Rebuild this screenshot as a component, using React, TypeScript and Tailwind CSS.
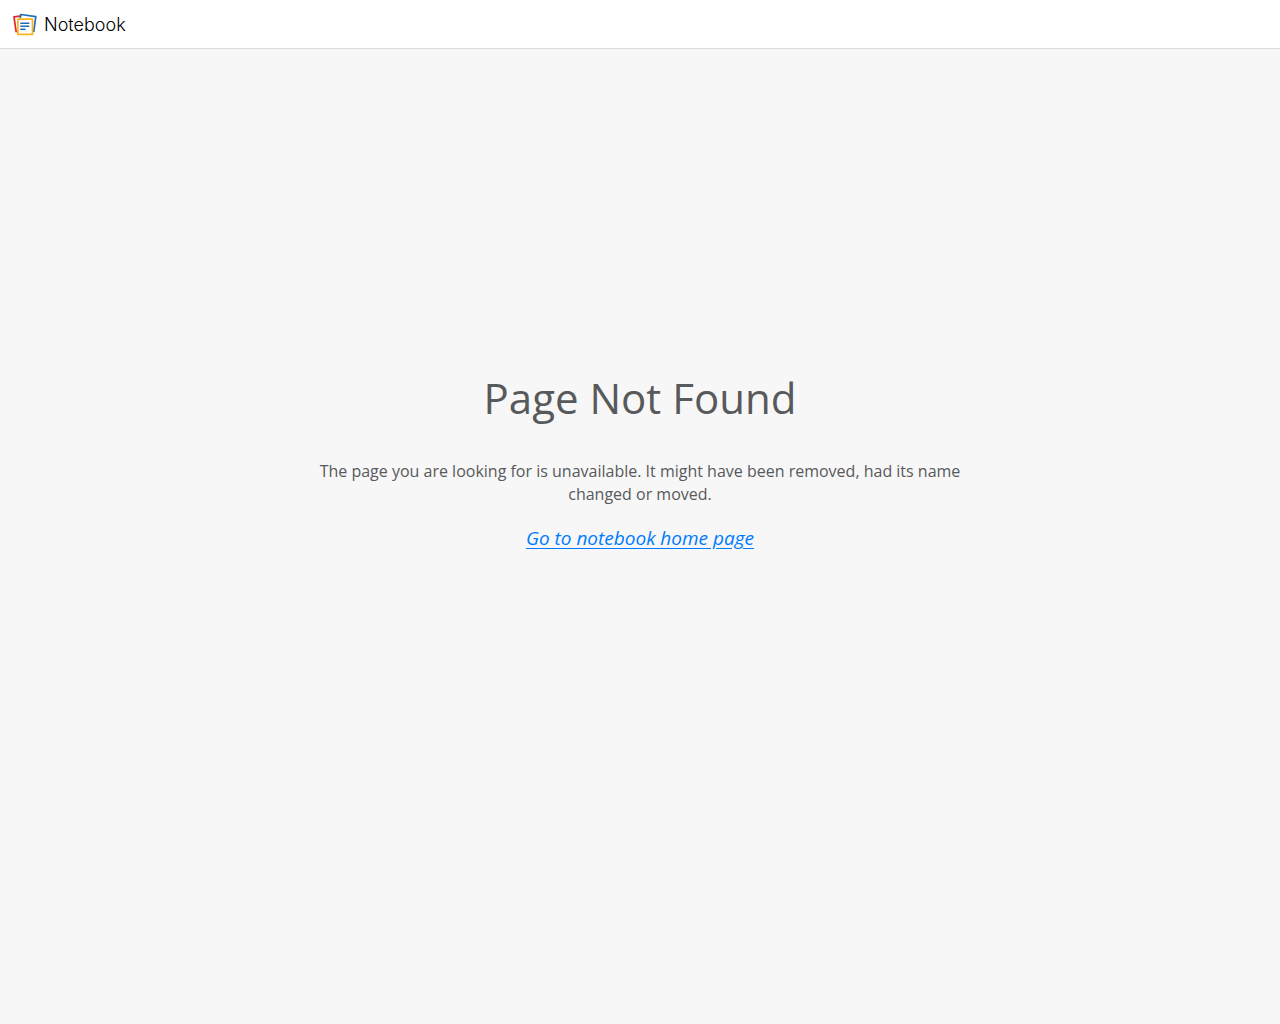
function NotebookLogo() {
  return (
    <svg className="w-6 h-6" viewBox="0 0 24 24" fill="none" strokeLinejoin="round" strokeLinecap="round" aria-hidden="true">
      {/* back cards */}
      <path d="M7 3.1L1 3.9L3.1 18.7" stroke="#e42527" strokeWidth="1.7" />
      <path d="M7.3 4.6L7.8 1.5L22.8 3.6L20.8 18.4" stroke="#226db4" strokeWidth="1.7" />
      {/* front card */}
      <rect x="4.9" y="6.2" width="14.6" height="15.2" fill="#fff" stroke="#fbb21d" strokeWidth="1.7" />
      <path d="M7.8 10.2H15.8M7.8 13.2H15.8M7.8 16.2H12" stroke="#226db4" strokeWidth="1.5" />
    </svg>
  )
}

export default function App() {
  return (
    <div className="min-h-screen flex flex-col bg-[#f7f7f7] font-['Open_Sans',sans-serif] text-[#58595b]">
      <header className="h-[49px] flex items-center gap-[7px] px-[13px] pt-px bg-white border-b border-[#dcdcdc]">
        <NotebookLogo />
        <span className="font-['Inter',sans-serif] font-[350] text-lg text-black">Notebook</span>
      </header>

      <main className="flex-1 pt-80 px-4 text-center">
        <div className="max-w-[650px] mx-auto">
          <h1 className="text-[42px] leading-[58px]">Page Not Found</h1>
          <p className="mt-[33px] text-base leading-[23px]">
            The page you are looking for is unavailable. It might have been removed, had its name changed or moved.
          </p>
          <p className="mt-[18px]">
            <a href="#" className="text-[19px] italic underline underline-offset-3 text-[#007bff]">
              Go to notebook home page
            </a>
          </p>
        </div>
      </main>
    </div>
  )
}
